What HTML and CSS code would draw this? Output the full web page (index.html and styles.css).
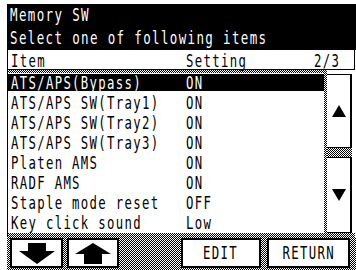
FILE: index.html
```html
<!DOCTYPE html>
<html>
<head>
<meta charset="utf-8">
<link rel="stylesheet" href="styles.css">
</head>
<body>
<div class="screen">
  <div class="title">
    <div class="tl"><span class="t">Memory SW</span></div>
    <div class="tl tl2"><span class="t">Select one of following items</span></div>
  </div>
  <div class="colhead">
    <span class="c1"><span class="t">Item</span></span>
    <span class="c2"><span class="t">Setting</span></span>
    <span class="c3"><span class="t">2/3</span></span>
  </div>
  <div class="main">
    <div class="list">
      <div class="row sel"><span class="name"><span class="t">ATS/APS(Bypass)</span></span><span class="val"><span class="t">ON</span></span></div>
      <div class="row"><span class="name"><span class="t">ATS/APS SW(Tray1)</span></span><span class="val"><span class="t">ON</span></span></div>
      <div class="row"><span class="name"><span class="t">ATS/APS SW(Tray2)</span></span><span class="val"><span class="t">ON</span></span></div>
      <div class="row"><span class="name"><span class="t">ATS/APS SW(Tray3)</span></span><span class="val"><span class="t">ON</span></span></div>
      <div class="row"><span class="name"><span class="t">Platen AMS</span></span><span class="val"><span class="t">ON</span></span></div>
      <div class="row"><span class="name"><span class="t">RADF AMS</span></span><span class="val"><span class="t">ON</span></span></div>
      <div class="row"><span class="name"><span class="t">Staple mode reset</span></span><span class="val"><span class="t">OFF</span></span></div>
      <div class="row"><span class="name"><span class="t">Key click sound</span></span><span class="val"><span class="t">Low</span></span></div>
    </div>
    <div class="scroll">
      <div class="sbtn sup"><svg width="14" height="12" viewBox="0 0 14 12"><polygon points="7,0 14,12 0,12" fill="#000"/></svg></div>
      <div class="sgap"></div>
      <div class="sbtn sdown"><svg width="14" height="12" viewBox="0 0 14 12"><polygon points="0,0 14,0 7,12" fill="#000"/></svg></div>
    </div>
  </div>
  <div class="bar">
    <div class="btn abtn"><svg width="36" height="21" viewBox="0 0 36 21"><polygon points="9,0 27,0 27,8 36,8 18,21 0,8 9,8" fill="#000"/></svg></div>
    <div class="btn abtn"><svg width="36" height="21" viewBox="0 0 36 21"><polygon points="18,0 36,11 27,11 27,21 9,21 9,11 0,11" fill="#000"/></svg></div>
    <div class="spacer"></div>
    <div class="btn tbtn edit"><span class="t">EDIT</span></div>
    <div class="btn tbtn ret"><span class="t">RETURN</span></div>
  </div>
</div>
</body>
</html>
```

FILE: styles.css
```css
html, body {
  margin: 0;
  padding: 0;
  background: #fff;
}
body {
  font-family: "DejaVu Sans Mono", "Liberation Mono", monospace;
  font-size: 14.5px;
  color: #000;
}
.t {
  display: inline-block;
  transform: scale(0.85, 1.2);
  transform-origin: 0 50%;
  letter-spacing: 1.54px;
  white-space: pre;
}
.screen {
  margin: 4px 0 0 7px;
  width: 349px;
}
.title {
  background: #000;
  color: #fff;
  height: 46px;
  padding-left: 3px;
  font-size: 14.7px;
}
.title .t {
  transform: scale(0.85, 1.25);
  letter-spacing: 1.6px;
}
.tl {
  height: 22px;
  line-height: 22px;
}
.tl2 {
  height: 24px;
  line-height: 24px;
}
.colhead {
  height: 20px;
  box-sizing: border-box;
  padding-top: 3px;
  line-height: 16px;
  border-left: 1px solid #000;
  border-right: 1px solid #000;
  border-bottom: 1px solid #000;
  display: flex;
  padding-left: 3px;
  margin-right: 1px;
}
.c1 { width: 175px; }
.c2 { flex: 1; }
.c3 { padding-right: 9px; }
.main {
  display: flex;
  height: 167px;
}
.list {
  width: 320px;
  box-sizing: border-box;
  border-left: 1px solid #000;
  padding-top: 3px;
  padding-bottom: 4px;
  background: repeating-conic-gradient(#000 0 25%, #fff 0 50%) 0 0 / 2px 2px;
}
.row {
  display: grid;
  grid-template-columns: 175px 1fr;
  height: 20px;
  line-height: 20px;
  padding-left: 3px;
  background: #fff;
  margin-right: 3px;
  overflow: hidden;
}
.row.sel {
  color: #fff;
  background: linear-gradient(#fff 0 1px, #000 1px 18px, #fff 18px 20px);
}
.scroll {
  width: 28px;
  box-sizing: border-box;
  padding-top: 4px;
  display: flex;
  flex-direction: column;
}
.sbtn {
  width: 25px;
  box-sizing: border-box;
  background: #fff;
  border: 1px solid #000;
  border-left: none;
  border-right: 2px solid #000;
  display: flex;
  align-items: center;
  justify-content: center;
}
.sup { height: 74px; }
.sgap {
  width: 25px;
  height: 9px;
  background: repeating-conic-gradient(#000 0 25%, #fff 0 50%) 0 0 / 2px 2px;
}
.sdown { height: 76px; }
.scroll::after {
  content: "";
  display: block;
  height: 4px;
  background: repeating-conic-gradient(#000 0 25%, #fff 0 50%) 0 0 / 2px 2px;
}
.bar {
  height: 33px;
  box-sizing: border-box;
  padding: 1px 6px 0 3px;
  display: flex;
  gap: 4px;
  background: repeating-conic-gradient(#000 0 25%, #fff 0 50%) 0 0 / 2px 2px;
}
.btn {
  height: 30px;
  box-sizing: border-box;
  background: #fff;
  border: 2px solid #000;
  display: flex;
  align-items: center;
  justify-content: center;
}
.abtn { width: 53px; }
.abtn + .abtn { width: 52px; }
.spacer { flex: 1; }
.edit { width: 80px; }
.ret { width: 83px; margin-left: 2px; }
.tbtn { line-height: 20px; }
.tbtn .t { transform-origin: 50% 50%; }
```
